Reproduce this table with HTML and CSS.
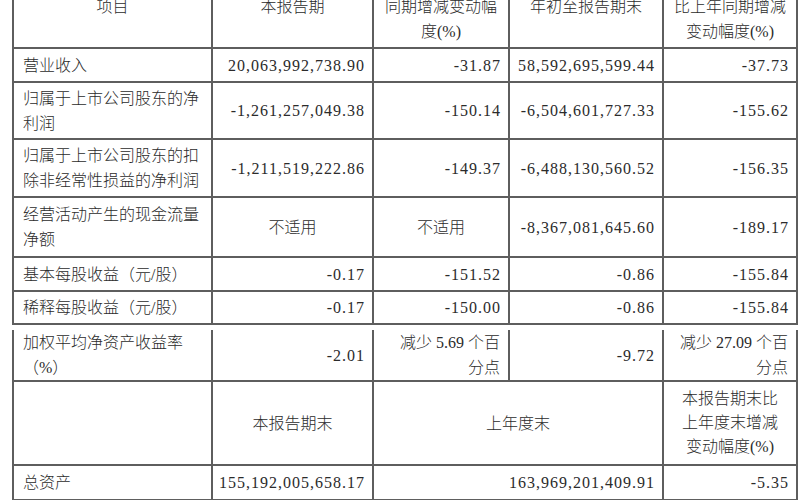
FILE: index.html
```html
<!DOCTYPE html>
<html lang="zh-CN">
<head>
<meta charset="utf-8">
<title>主要会计数据</title>
<link rel="stylesheet" href="styles.css">
</head>
<body>
<div class="page">
  <div class="grid t1">
    <div class="c h hdr c-center">项目</div>
    <div class="c h hdr c-center">本报告期</div>
    <div class="c h hdr c-center">本报告期比上年<br>同期增减变动幅<br>度(%)</div>
    <div class="c h hdr c-center">年初至报告期末</div>
    <div class="c h hdr c-center">年初至报告期末<br>比上年同期增减<br>变动幅度(%)</div>

    <div class="c r1 lbl">营业收入</div>
    <div class="c r1 num">20,063,992,738.90</div>
    <div class="c r1 num">-31.87</div>
    <div class="c r1 num">58,592,695,599.44</div>
    <div class="c r1 num">-37.73</div>

    <div class="c r2 lbl">归属于上市公司股东的净<br>利润</div>
    <div class="c r2 num">-1,261,257,049.38</div>
    <div class="c r2 num">-150.14</div>
    <div class="c r2 num">-6,504,601,727.33</div>
    <div class="c r2 num">-155.62</div>

    <div class="c r3 lbl">归属于上市公司股东的扣<br>除非经常性损益的净利润</div>
    <div class="c r3 num">-1,211,519,222.86</div>
    <div class="c r3 num">-149.37</div>
    <div class="c r3 num">-6,488,130,560.52</div>
    <div class="c r3 num">-156.35</div>

    <div class="c r4 lbl">经营活动产生的现金流量<br>净额</div>
    <div class="c r4 c-center">不适用</div>
    <div class="c r4 c-center">不适用</div>
    <div class="c r4 num">-8,367,081,645.60</div>
    <div class="c r4 num">-189.17</div>

    <div class="c r5 lbl">基本每股收益（元/股）</div>
    <div class="c r5 num">-0.17</div>
    <div class="c r5 num">-151.52</div>
    <div class="c r5 num">-0.86</div>
    <div class="c r5 num">-155.84</div>

    <div class="c r6 lbl">稀释每股收益（元/股）</div>
    <div class="c r6 num">-0.17</div>
    <div class="c r6 num">-150.00</div>
    <div class="c r6 num">-0.86</div>
    <div class="c r6 num">-155.84</div>
  </div>

  <div class="grid t2">
    <div class="c r7 lbl">加权平均净资产收益率<br>（%）</div>
    <div class="c r7 num">-2.01</div>
    <div class="c r7 txt-r">减少 5.69 个百<br>分点</div>
    <div class="c r7 num">-9.72</div>
    <div class="c r7 txt-r">减少 27.09 个百<br>分点</div>

    <div class="c r8"></div>
    <div class="c r8 c-center">本报告期末</div>
    <div class="c r8 c-center span2">上年度末</div>
    <div class="c r8 c-center hdr2">本报告期末比<br>上年度末增减<br>变动幅度(%)</div>

    <div class="c r9 lbl">总资产</div>
    <div class="c r9 num">155,192,005,658.17</div>
    <div class="c r9 num span2">163,969,201,409.91</div>
    <div class="c r9 num">-5.35</div>

    <div class="c r10"></div>
    <div class="c r10"></div>
    <div class="c r10 span2"></div>
    <div class="c r10"></div>
  </div>
</div>
</body>
</html>
```

FILE: styles.css
```css
html, body {
  margin: 0;
  padding: 0;
  background: #ffffff;
}

body {
  font-family: "Liberation Serif", "Noto Sans CJK SC", serif;
  font-size: 16px;
  color: #2b2b2b;
  overflow: hidden;
}

.page {
  margin-top: -37px;
  padding-left: 12px;
}

.grid {
  display: grid;
  grid-template-columns: 199px 161px 136px 154px 134px;
  width: 786px;
  box-sizing: border-box;
  border-left: 2px solid #5e5e5e;
}

.t1 {
  border-top: 2px solid #5e5e5e;
}

.t2 {
  margin-top: 5px;
}

.c {
  box-sizing: border-box;
  border-right: 2px solid #5e5e5e;
  border-bottom: 2px solid #5e5e5e;
  display: flex;
  flex-direction: column;
  justify-content: center;
  line-height: 25px;
  padding: 0 9px 0 9px;
  font-weight: 300;
}

.lbl {
  align-items: flex-start;
  text-align: left;
}

.num {
  align-items: flex-end;
  text-align: right;
  letter-spacing: 1px;
  padding-right: 7px;
}

.txt-r {
  align-items: flex-end;
  text-align: right;
  padding-right: 8px;
}

.c-center {
  align-items: center;
  text-align: center;
}

.hdr2 {
  line-height: 24px;
}

.span2 {
  grid-column: span 2;
}

.h  { height: 84px; }
.r1 { height: 34px; }
.r2 { height: 57px; }
.r3 { height: 58px; }
.r4 { height: 60px; }
.r5 { height: 34px; }
.r6 { height: 33px; }
.r7 { height: 52px; }
.r8 { height: 84px; }
.r9 { height: 35px; }
.r10 { height: 40px; }
```
